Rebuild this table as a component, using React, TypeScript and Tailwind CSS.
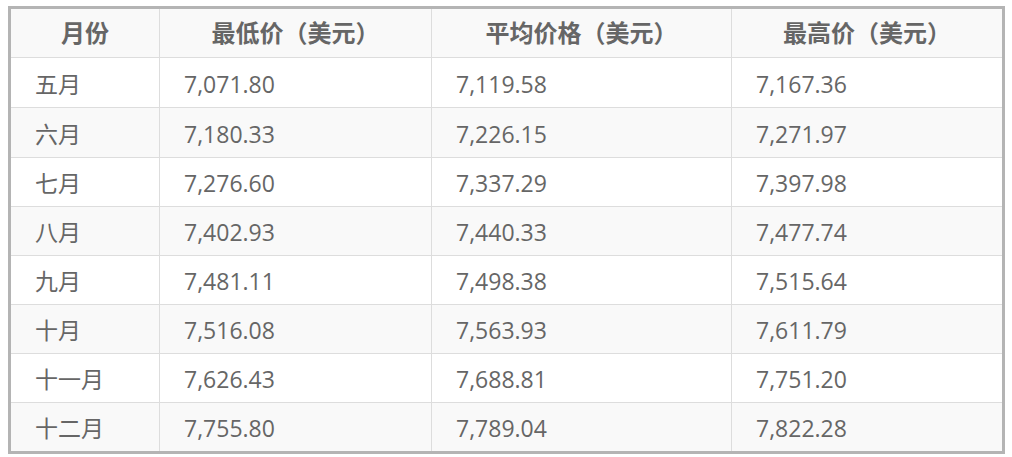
const rows = [
  ["五月", "7,071.80", "7,119.58", "7,167.36"],
  ["六月", "7,180.33", "7,226.15", "7,271.97"],
  ["七月", "7,276.60", "7,337.29", "7,397.98"],
  ["八月", "7,402.93", "7,440.33", "7,477.74"],
  ["九月", "7,481.11", "7,498.38", "7,515.64"],
  ["十月", "7,516.08", "7,563.93", "7,611.79"],
  ["十一月", "7,626.43", "7,688.81", "7,751.20"],
  ["十二月", "7,755.80", "7,789.04", "7,822.28"],
];

const headers = ["月份", "最低价（美元）", "平均价格（美元）", "最高价（美元）"];

const font = { fontFamily: '"Open Sans", "Noto Sans CJK SC", sans-serif' };

export default function App() {
  return (
    <div className="min-h-screen bg-white pl-[8px] pt-[6px]" style={font}>
      <div className="w-[997px] border-[3px] border-[#b4b4b4] text-[23px] text-[#666666]">
        <div className="grid h-[49px] grid-cols-[149px_272px_300px_270px] border-b border-[#dddddd] bg-[#f9f9f9] text-[24px] font-bold">
          {headers.map((h, i) => (
            <div
              key={h}
              className={`flex items-center justify-center ${i < 3 ? "border-r border-[#dddddd]" : ""}`}
            >
              {h}
            </div>
          ))}
        </div>
        {rows.map((r, ri) => (
          <div
            key={r[0]}
            className={`grid grid-cols-[149px_272px_300px_270px] ${ri < 2 ? "h-[50px]" : ri === rows.length - 1 ? "h-[48px]" : "h-[49px]"} ${ri % 2 === 1 ? "bg-[#f9f9f9]" : "bg-white"} ${ri < rows.length - 1 ? "border-b border-[#dddddd]" : ""}`}
          >
            {r.map((c, ci) => (
              <div
                key={ci}
                className={`flex items-center pl-6 pt-[3px] ${ci < 3 ? "border-r border-[#dddddd]" : ""}`}
              >
                {c}
              </div>
            ))}
          </div>
        ))}
      </div>
    </div>
  );
}
